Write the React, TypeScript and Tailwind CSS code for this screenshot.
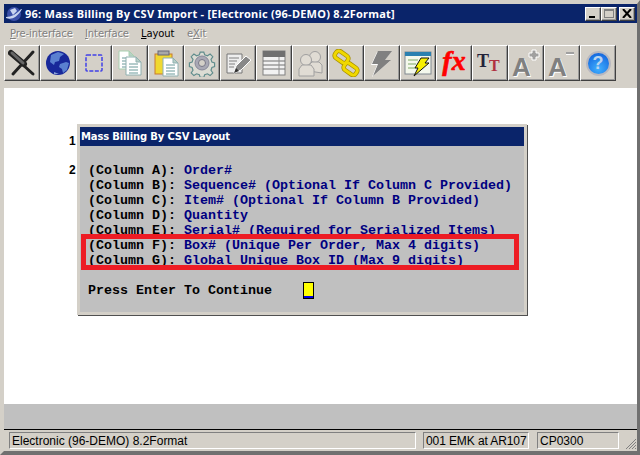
import type { ReactNode } from 'react'

const rows = [
  ['(Column A): ', 'Order#'],
  ['(Column B): ', 'Sequence# (Optional If Column C Provided)'],
  ['(Column C): ', 'Item# (Optional If Column B Provided)'],
  ['(Column D): ', 'Quantity'],
  ['(Column E): ', 'Serial# (Required for Serialized Items)'],
  ['(Column F): ', 'Box# (Unique Per Order, Max 4 digits)'],
  ['(Column G): ', 'Global Unique Box ID (Max 9 digits)'],
]

const raised =
  'border border-t-white border-l-white border-r-[#404040] border-b-[#404040] shadow-[inset_-1px_-1px_0_#9a9a9a]'

const sunken = 'border border-t-[#808080] border-l-[#808080] border-r-white border-b-white'

function Svg({ children }: { children: ReactNode }) {
  return (
    <svg width="28" height="28" viewBox="0 0 28 28">
      {children}
    </svg>
  )
}

function ToolButton({ children }: { children: ReactNode }) {
  return <div className={`w-[36px] h-[36px] flex items-center justify-center bg-[#d4d0c8] ${raised}`}>{children}</div>
}

function Doc({ x, y, c = '#8fb0b0' }: { x: number; y: number; c?: string }) {
  return (
    <g>
      <path d={`M${x} ${y}h10l5 5v13h-15z`} fill="#fff" stroke={c} />
      <path d={`M${x + 10} ${y}v5h5z`} fill="#b8d0c8" stroke={c} />
      <path d={`M${x + 3} ${y + 7}h9M${x + 3} ${y + 10}h9M${x + 3} ${y + 13}h9M${x + 3} ${y + 16}h9`} stroke="#6a9a9a" />
    </g>
  )
}

function Toolbar() {
  return (
    <div className="flex mt-[1px] h-[36px]">
      <ToolButton>
        <Svg>
          <path d="M25 3L5 25" stroke="#222" strokeWidth="3" strokeLinecap="round" />
          <path d="M4 6l21 19" stroke="#222" strokeWidth="3" strokeLinecap="round" />
          <path d="M3 4l13 11" stroke="#222" strokeWidth="6" strokeLinecap="round" />
          <path d="M4 4l11 10" stroke="#666" strokeWidth="3" strokeLinecap="round" />
        </Svg>
      </ToolButton>
      <ToolButton>
        <Svg>
          <circle cx="14" cy="14" r="12" fill="#18289a" />
          <path d="M7 6l7-3 6 2-4 3-1 4-4 1-1 3-4-3zM16 15l6-2 3 1-2 7-4 3-1-4-3-2z" fill="#5a80d0" />
          <path d="M10 23l5 2-5 0z" fill="#88a0d8" />
        </Svg>
      </ToolButton>
      <ToolButton>
        <Svg>
          <rect x="6" y="6" width="16" height="16" rx="1" fill="none" stroke="#4040e8" strokeWidth="1.5" strokeDasharray="4 1.5" />
        </Svg>
      </ToolButton>
      <ToolButton>
        <Svg>
          <Doc x={3} y={2} c="#a8d0b0" />
          <Doc x={10} y={8} />
        </Svg>
      </ToolButton>
      <ToolButton>
        <Svg>
          <rect x="3" y="5" width="17" height="20" fill="#f0d830" stroke="#c87a30" />
          <rect x="6" y="2" width="11" height="4" fill="#a8a8a8" stroke="#667" />
          <Doc x={11} y={9} />
        </Svg>
      </ToolButton>
      <ToolButton>
        <Svg>
          <path d="M12 2h4l1 3 3 1 3-2 3 3-2 3 1 3 3 1v4l-3 1-1 3 2 3-3 3-3-2-3 1-1 3h-4l-1-3-3-1-3 2-3-3 2-3-1-3-3-1v-4l3-1 1-3-2-3 3-3 3 2 3-1z" fill="#dcdcd4" stroke="#5f8c8c" strokeWidth="1.3" transform="translate(1.4 1.4) scale(0.9)" />
          <circle cx="14" cy="14" r="7" fill="#a8a8b4" stroke="#889" />
          <circle cx="14" cy="14" r="3.5" fill="#d4d0c8" stroke="#778" />
        </Svg>
      </ToolButton>
      <ToolButton>
        <Svg>
          <path d="M3 5h15v19H3z" fill="#eee" stroke="#777" />
          <path d="M5 9h10M5 12h8M5 15h6M5 18h5" stroke="#808080" />
          <path d="M10 24l2-7 10-10 5 4-10 10z" fill="#888" stroke="#fff" />
          <path d="M10 24l2-5 3 3z" fill="#333" />
        </Svg>
      </ToolButton>
      <ToolButton>
        <Svg>
          <rect x="3" y="2" width="22" height="24" fill="#f2f2f2" stroke="#808080" />
          <rect x="3" y="2" width="22" height="6" fill="#707070" />
          <path d="M3 12h22M3 16h22M3 20h22" stroke="#707070" />
          <path d="M19 8v18" stroke="#909090" />
        </Svg>
      </ToolButton>
      <ToolButton>
        <Svg>
          <circle cx="19" cy="8" r="5.5" fill="#e0dcd4" stroke="#a0a0a0" />
          <path d="M13 22v-6l3-3h7l3 3v8z" fill="#e0dcd4" stroke="#a0a0a0" />
          <circle cx="10" cy="11" r="5.5" fill="#e0dcd4" stroke="#a0a0a0" />
          <path d="M3 27v-7l3-4h9l3 4v7z" fill="#e0dcd4" stroke="#a0a0a0" />
        </Svg>
      </ToolButton>
      <ToolButton>
        <Svg>
          <g fill="none">
            <rect x="2.5" y="4" width="14" height="8" rx="3" transform="rotate(35 9.5 8)" stroke="#a89000" strokeWidth="4.5" />
            <rect x="11.5" y="16" width="14" height="8" rx="3" transform="rotate(35 18.5 20)" stroke="#a89000" strokeWidth="4.5" />
            <rect x="2.5" y="4" width="14" height="8" rx="3" transform="rotate(35 9.5 8)" stroke="#f0d800" strokeWidth="3" />
            <rect x="11.5" y="16" width="14" height="8" rx="3" transform="rotate(35 18.5 20)" stroke="#f0d800" strokeWidth="3" />
          </g>
        </Svg>
      </ToolButton>
      <ToolButton>
        <Svg>
          <path d="M10 2h14l-7 9h6L5 27l5-12H4z" fill="#fff" transform="translate(-1 1)" />
          <path d="M10 2h14l-7 9h6L5 27l5-12H4z" fill="#808080" />
        </Svg>
      </ToolButton>
      <ToolButton>
        <Svg>
          <rect x="1" y="3" width="26" height="22" fill="#f4f8ec" stroke="#808890" />
          <rect x="1" y="3" width="26" height="4" fill="#2a80b0" />
          <path d="M4 10h10v2H4zM4 14h8v2H4zM4 18h7v2H4z" fill="#b8d0a8" />
          <path d="M17 9h8l-4 5h4L10 27l4-8h-3z" fill="#f8f000" stroke="#111" strokeWidth="1" />
        </Svg>
      </ToolButton>
      <ToolButton>
        <span className="font-['Liberation_Serif',serif] font-bold italic text-[28px] leading-none text-[#ff0000] [-webkit-text-stroke:0.6px_#ff0000] -mt-[4px]">fx</span>
      </ToolButton>
      <ToolButton>
        <div className="relative w-[28px] h-[28px] font-['Liberation_Serif',serif] font-bold leading-none">
          <span className="absolute left-[1px] top-[3px] text-[18px] text-[#23233a]">T</span>
          <span className="absolute left-[13px] top-[9px] text-[16px] text-[#b03040]">T</span>
        </div>
      </ToolButton>
      <ToolButton>
        <div className="relative w-[28px] h-[28px] font-['Liberation_Sans',sans-serif] font-bold leading-none text-[#808080] [text-shadow:1px_1px_0_#fff]">
          <span className="absolute left-0 top-[5px] text-[26px]">A</span>
          <svg className="absolute left-[16px] top-0" width="12" height="12" viewBox="0 0 12 12">
            <path d="M4 1h4v3h3v4H8v3H4V8H1V4h3z" fill="#a0a0a0" stroke="#fff" />
          </svg>
        </div>
      </ToolButton>
      <ToolButton>
        <div className="relative w-[28px] h-[28px] font-['Liberation_Sans',sans-serif] font-bold leading-none text-[#808080] [text-shadow:1px_1px_0_#fff]">
          <span className="absolute left-0 top-[5px] text-[26px]">A</span>
          <span className="absolute left-[18px] top-[3px] w-[8px] h-[3px] bg-[#a0a0a0] border-b border-white" />
        </div>
      </ToolButton>
      <ToolButton>
        <div className="w-[25px] h-[25px] rounded-full bg-[radial-gradient(circle_at_50%_75%,#40b0ff,#0a58d8)] border-2 border-[#b8b8c0] flex items-center justify-center font-['Liberation_Sans',sans-serif] font-bold text-[18px] leading-none text-[#b8d4f0]">
          ?
        </div>
      </ToolButton>
    </div>
  )
}

function Dialog() {
  return (
    <div className="absolute left-[73px] top-[36px] w-[450px] h-[191px] flex flex-col bg-[#c0c0c0] border-3 border-[#d4d0c8] shadow-[1px_1px_0_#505050]">
      <div className="h-[19px] bg-[#0a246a] text-white font-['DejaVu_Sans',sans-serif] font-bold text-[10px] tracking-[-0.15px] leading-[19px] pl-[1px] shrink-0">
        Mass Billing By CSV Layout
      </div>
      <div className="pl-[8px] pt-[17px] font-['Liberation_Mono',monospace] font-bold text-[13.33px] leading-[15px] whitespace-pre">
        {rows.map(([label, text]) => (
          <div key={label} className="h-[15px]">
            <span className="text-black">{label}</span>
            <span className="text-[#000080]">{text}</span>
          </div>
        ))}
        <div className="relative h-[15px] mt-[15px] text-black">
          Press Enter To Continue
          <span className="absolute left-[215px] -top-[1px] w-[11px] h-[17px] bg-[#ffff00] border border-black shadow-[inset_0_-2px_0_#0000e0]" />
        </div>
      </div>
      <div className="absolute left-[1px] top-[107px] w-[438px] h-[36px] border-5 border-[#ed1c24]" />
    </div>
  )
}

export default function App() {
  return (
    <div className="w-[640px] h-[455px] overflow-hidden bg-[#d4d0c8] flex flex-col border-t-4 border-l-4 border-r-3 border-b-4 border-t-[#d4d0c8] border-l-[#d4d0c8] border-r-[#707070] border-b-[#707070]">
      <div className="h-[19px] shrink-0 bg-[#0a246a] flex items-center pl-[1px] pr-[2px]">
        <svg width="18" height="18" viewBox="0 0 18 18">
          <circle cx="9" cy="9" r="7" fill="#3a4fa8" />
          <path d="M5 5l5-2 2 3-4 4zM1 13c5 2 11 0 16-9l-1 0C12 9 6 12 1 12z" fill="#c8d4f0" />
        </svg>
        <span className="ml-[2px] text-white font-['Noto_Sans',sans-serif] font-bold text-[11px] tracking-[0.25px] leading-none whitespace-pre">
          96: Mass Billing By CSV Import - [Electronic (96-DEMO) 8.2Format]
        </span>
        <div className="ml-auto flex">
          <div className={`w-[16px] h-[14px] bg-[#d4d0c8] ${raised} relative`}>
            <span className="absolute left-[3px] bottom-[2px] w-[6px] h-[2px] bg-black" />
          </div>
          <div className={`w-[16px] h-[14px] bg-[#d4d0c8] ${raised} relative`}>
            <span className="absolute left-[2px] top-[1px] w-[10px] h-[9px] border border-t-2 border-[#808080]" />
          </div>
          <div className={`ml-[2px] w-[16px] h-[14px] bg-[#d4d0c8] ${raised} flex items-center justify-center`}>
            <svg width="10" height="9" viewBox="0 0 10 9">
              <path d="M1 0l8 9M9 0L1 9" stroke="#000" strokeWidth="2" />
            </svg>
          </div>
        </div>
      </div>

      <div className="h-[20px] mt-[1px] shrink-0 flex items-center font-['DejaVu_Sans',sans-serif] text-[10px] tracking-[-0.1px] leading-none">
        <span className="ml-[6px] w-[75px] text-[#808080] [text-shadow:1px_1px_0_#fff]">
          <u>P</u>re-interface
        </span>
        <span className="w-[56px] text-[#808080] [text-shadow:1px_1px_0_#fff]">
          <u>I</u>nterface
        </span>
        <span className="w-[46px] text-black">
          <u>L</u>ayout
        </span>
        <span className="text-[#808080] [text-shadow:1px_1px_0_#fff]">
          e<u>X</u>it
        </span>
      </div>

      <Toolbar />

      <div className="relative mt-[7px] h-[316px] shrink-0 bg-white font-['Liberation_Sans',sans-serif] font-bold text-[12px] text-black">
        <span className="absolute left-[65px] top-[44px]">1</span>
        <span className="absolute left-[65px] top-[73px]">2</span>
        <Dialog />
      </div>

      <div className="h-[26px] shrink-0 bg-[#c0c0c0] border-b border-black" />

      <div className="flex flex-1 items-start pt-[2px] pl-[5px] font-['Liberation_Sans',sans-serif] text-[12px] leading-none text-black">
        <div className={`w-[407px] h-[17px] flex items-center pl-[2px] ${sunken}`}>
          Electronic (96-DEMO) 8.2Format
        </div>
        <div className={`ml-[7px] w-[106px] h-[17px] flex items-center pl-[2px] tracking-[-0.1px] whitespace-pre ${sunken}`}>
          001 EMK at AR107
        </div>
        <div className={`ml-[8px] w-[82px] h-[17px] flex items-center pl-[2px] ${sunken}`}>
          CP0300
        </div>
        <svg className="ml-[6px] mt-[6px]" width="12" height="12" viewBox="0 0 12 12">
          <path d="M11 1L1 11M11 4L4 11M11 7L7 11M11 10L10 11" stroke="#808080" />
        </svg>
      </div>
    </div>
  )
}
